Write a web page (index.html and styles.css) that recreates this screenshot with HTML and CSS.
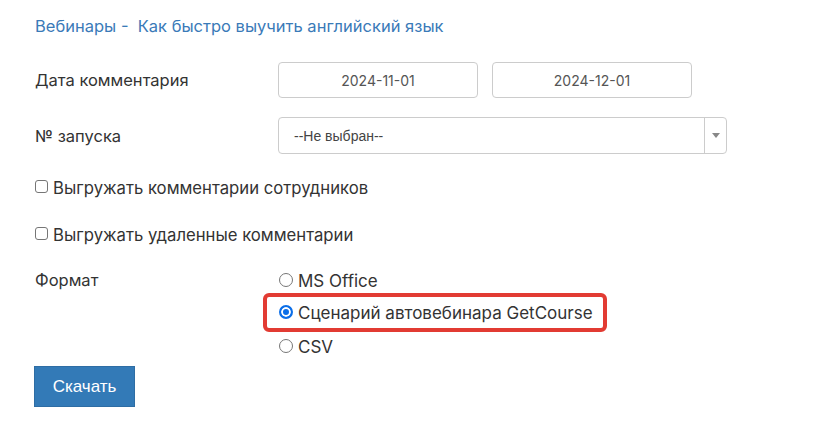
FILE: index.html
```html
<!DOCTYPE html>
<html lang="ru">
<head>
<meta charset="utf-8">
<link rel="stylesheet" href="styles.css">
</head>
<body>
<div class="page">
  <div class="crumbs"><a class="link" href="#">Вебинары</a> - &nbsp;<a class="link" href="#">Как быстро выучить английский язык</a></div>

  <div class="row row-date">
    <div class="label">Дата комментария</div>
    <div class="field dates">
      <div class="input">2024-11-01</div>
      <div class="input">2024-12-01</div>
    </div>
  </div>

  <div class="row row-select">
    <div class="label">№ запуска</div>
    <div class="field">
      <div class="select">
        <span class="select-text">--Не выбран--</span>
        <span class="select-arrow"><span class="tri"></span></span>
      </div>
    </div>
  </div>

  <label class="check check-1"><span class="box"></span>Выгружать комментарии сотрудников</label>
  <label class="check check-2"><span class="box"></span>Выгружать удаленные комментарии</label>

  <div class="row row-format">
    <div class="label">Формат</div>
    <div class="radios">
      <label class="radio"><span class="dot"></span>MS Office</label>
      <label class="radio selected"><span class="dot on"></span>Сценарий автовебинара GetCourse</label>
      <label class="radio"><span class="dot"></span>CSV</label>
    </div>
  </div>

  <button class="btn">Скачать</button>
</div>
</body>
</html>
```

FILE: styles.css
```css
* { box-sizing: border-box; }
html, body { margin: 0; padding: 0; background: #fff; }
body {
  font-family: Inter, "Noto Sans", sans-serif;
  color: #333;
  font-size: 16px;
}
.page {
  padding: 14px 0 0 35px;
  width: 813px;
}
.crumbs {
  font-size: 16.5px;
  line-height: 24px;
  color: #3a7ab8;
  white-space: nowrap;
}
.link { color: #3a7ab8; text-decoration: none; }

.row { display: flex; align-items: center; }
.label {
  width: 243px;
  font-size: 16.5px;
  color: #333;
}
.row-date { margin-top: 24px; height: 36px; }
.dates { display: flex; gap: 14px; }
.input {
  width: 200px;
  height: 36px;
  border: 1px solid #ccc;
  border-radius: 4px;
  display: flex;
  align-items: center;
  justify-content: center;
  font-size: 14px;
  color: #555;
}
.row-select { margin-top: 19px; height: 37px; }
.select {
  width: 449px;
  height: 37px;
  border: 1px solid #ccc;
  border-radius: 4px;
  display: flex;
  align-items: center;
}
.select-text {
  flex: 1;
  padding-left: 15px;
  font-family: "Liberation Sans", Arial, sans-serif;
  font-size: 14px;
  color: #444;
}
.select-arrow {
  width: 22px;
  height: 100%;
  border-left: 1px solid #ccc;
  display: flex;
  align-items: center;
  justify-content: center;
}
.tri {
  width: 0; height: 0;
  border-left: 4px solid transparent;
  border-right: 4px solid transparent;
  border-top: 5px solid #888;
}

.check {
  display: flex;
  align-items: center;
  font-size: 16.7px;
  color: #333;
  height: 24px;
}
.check-1 { margin-top: 22px; }
.check-2 { margin-top: 23px; }
.box {
  width: 13px; height: 13px;
  border: 1px solid #767676;
  border-radius: 3px;
  margin: 0 5px 0 0;
  background: #fff;
  flex: none;
  position: relative;
  top: -2px;
}

.row-format { margin-top: 21px; align-items: flex-start; }
.row-format .label { line-height: 24px; }
.radios { display: flex; flex-direction: column; padding-top: 1px; }
.radio {
  display: flex;
  align-items: center;
  font-size: 17px;
  color: #333;
  height: 24px;
  margin-left: 1px;
}
.radio.selected {
  border: 4px solid #e23b33;
  border-radius: 6px;
  height: 39px;
  margin: 0 0 0 -15px;
  padding: 0 10px 0 12px;
  align-self: flex-start;
}
.radio.selected + .radio { margin-top: 3px; }
.dot {
  width: 14px; height: 14px;
  border: 1px solid #767676;
  border-radius: 50%;
  margin-right: 5px;
  flex: none;
  background: #fff;
  position: relative;
  top: -1px;
}
.dot.on {
  border: 2px solid #0b6ee8;
  box-shadow: inset 0 0 0 2px #fff;
  background: #0b6ee8;
}

.btn {
  margin-top: 7px;
  margin-left: -1px;
  display: block;
  width: 101px;
  height: 41px;
  background: #337ab7;
  border: 1px solid #2e6da4;
  border-radius: 0;
  color: #fff;
  font-family: "Liberation Sans", Arial, sans-serif;
  font-size: 17px;
  padding: 0;
}
```
